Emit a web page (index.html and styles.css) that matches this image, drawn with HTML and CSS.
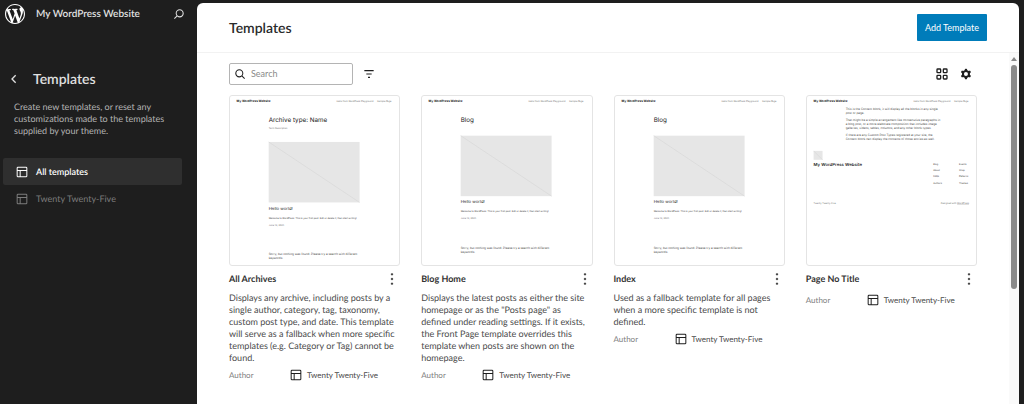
FILE: index.html
```html
<!DOCTYPE html>
<html lang="en">
<head>
    <meta charset="UTF-8">
    <meta name="viewport" content="width=device-width, initial-scale=1.0">
    <title>Templates</title>
    <link rel="stylesheet" href="styles.css">
</head>
<body>
    <svg class="sprite" aria-hidden="true">
        <symbol id="icon-layout" viewBox="0 0 24 24">
            <path d="M18 5.5H6a.5.5 0 00-.5.5v3h13V6a.5.5 0 00-.5-.5zm.5 5H10v8h8a.5.5 0 00.5-.5v-7.5zm-10 0h-3V18a.5.5 0 00.5.5h2.5v-8zM6 4h12a2 2 0 012 2v12a2 2 0 01-2 2H6a2 2 0 01-2-2V6a2 2 0 012-2z"/>
        </symbol>
        <symbol id="icon-search" viewBox="0 0 24 24">
            <path d="M13 5c-3.3 0-6 2.7-6 6 0 1.4.5 2.7 1.3 3.7l-3.8 3.8 1.1 1.1 3.8-3.8c1 .8 2.3 1.3 3.7 1.3 3.3 0 6-2.7 6-6S16.3 5 13 5zm0 10.5c-2.5 0-4.5-2-4.5-4.5s2-4.5 4.5-4.5 4.5 2 4.5 4.5-2 4.5-4.5 4.5z"/>
        </symbol>
        <symbol id="icon-more" viewBox="0 0 24 24">
            <path d="M13 20h-2v-2h2v2zm0-7h-2v-2h2v2zm0-7h-2V4h2v2z" stroke="currentColor"/>
        </symbol>
    </svg>

    <aside class="sidebar">
        <header class="site-hub">
            <svg class="logo" viewBox="0 0 20 20" aria-hidden="true">
                <path d="M20 10c0-5.51-4.49-10-10-10C4.48 0 0 4.49 0 10c0 5.52 4.48 10 10 10 5.51 0 10-4.48 10-10zM7.78 15.37L4.37 6.22c.55-.02 1.17-.08 1.17-.08.5-.06.44-1.13-.06-1.11 0 0-1.45.11-2.37.11-.18 0-.37 0-.58-.01C4.12 2.69 6.87 1.11 10 1.11c2.33 0 4.45.87 6.05 2.34-.68-.11-1.65.39-1.65 1.58 0 .74.45 1.36.9 2.1.35.61.55 1.36.55 2.46 0 1.49-1.4 5-1.4 5l-3.03-8.37c.54-.02.82-.17.82-.17.5-.05.44-1.25-.06-1.22 0 0-1.44.12-2.38.12-.87 0-2.33-.12-2.33-.12-.5-.03-.56 1.2-.06 1.22l.92.08 1.26 3.41zM17.41 10c.24-.64.74-1.87.43-4.25.7 1.29 1.05 2.71 1.05 4.25 0 3.29-1.73 6.24-4.4 7.78.97-2.59 1.94-5.2 2.92-7.78zM6.1 18.09C3.12 16.65 1.11 13.53 1.11 10c0-1.3.23-2.48.72-3.59C3.25 10.3 4.67 14.2 6.1 18.09zm4.03-6.63l2.58 6.98c-.86.29-1.76.45-2.71.45-.79 0-1.57-.11-2.29-.33.81-2.38 1.62-4.74 2.42-7.1z"/>
            </svg>
            <a class="site-name" href="#">My WordPress Website</a>
            <button class="icon-button" type="button" aria-label="Open command palette">
                <svg class="icon"><use href="#icon-search"/></svg>
            </button>
        </header>
        <div class="sidebar-title">
            <button class="icon-button" type="button" aria-label="Back">
                <svg class="icon" viewBox="0 0 24 24"><path d="M14.5 6.5L9 12l5.5 5.5" fill="none" stroke="currentColor" stroke-width="2"/></svg>
            </button>
            <h1>Templates</h1>
        </div>
        <p class="sidebar-text">Create new templates, or reset any customizations made to the templates supplied by your theme.</p>
        <nav class="sidebar-nav">
            <a class="nav-item active" href="#"><svg class="icon"><use href="#icon-layout"/></svg>All templates</a>
            <a class="nav-item" href="#"><svg class="icon"><use href="#icon-layout"/></svg>Twenty Twenty-Five</a>
        </nav>
    </aside>

    <main class="page">
        <header class="page-header">
            <h2>Templates</h2>
            <button class="primary-button" type="button">Add Template</button>
        </header>
        <div class="page-body">
            <div class="content">
                <div class="toolbar">
                    <label class="search">
                        <svg class="icon flip"><use href="#icon-search"/></svg>
                        <input type="search" placeholder="Search" aria-label="Search">
                    </label>
                    <button class="icon-button" type="button" aria-label="Filter">
                        <svg class="icon" viewBox="0 0 24 24"><path d="M5 7h14M8 12h8M10.500 17h3" fill="none" stroke="currentColor" stroke-width="1.800"/></svg>
                    </button>
                    <div class="view-actions">
                        <button class="icon-button" type="button" aria-label="Layout">
                            <svg class="icon outline" viewBox="0 0 24 24">
                                <rect x="4.500" y="4.500" width="5.500" height="5.500" rx="1"/>
                                <rect x="14" y="4.500" width="5.500" height="5.500" rx="1"/>
                                <rect x="4.500" y="14" width="5.500" height="5.500" rx="1"/>
                                <rect x="14" y="14" width="5.500" height="5.500" rx="1"/>
                            </svg>
                        </button>
                        <button class="icon-button" type="button" aria-label="View options">
                            <svg class="icon" viewBox="0 0 24 24"><path fill-rule="evenodd" d="M10.289 4.836A1 1 0 0111.275 4h1.306a1 1 0 01.987.836l.244 1.466c.787.26 1.503.679 2.108 1.218l1.393-.522a1 1 0 011.216.437l.653 1.13a1 1 0 01-.23 1.273l-1.148.944a6.025 6.025 0 010 2.435l1.149.946a1 1 0 01.23 1.272l-.653 1.13a1 1 0 01-1.216.437l-1.394-.522c-.605.54-1.32.958-2.108 1.218l-.244 1.466a1 1 0 01-.987.836h-1.306a1 1 0 01-.986-.836l-.244-1.466a5.995 5.995 0 01-2.108-1.218l-1.394.522a1 1 0 01-1.217-.436l-.653-1.131a1 1 0 01.23-1.272l1.149-.946a6.026 6.026 0 010-2.435l-1.148-.944a1 1 0 01-.23-1.272l.653-1.131a1 1 0 011.217-.437l1.393.522a5.994 5.994 0 012.108-1.218l.244-1.466zM14.929 12a3 3 0 11-6 0 3 3 0 016 0z"/></svg>
                        </button>
                    </div>
                </div>

                <div class="grid">
                    <article class="card">
                        <svg class="preview" viewBox="0 0 512 512">
                            <text class="site" x="20" y="19">My WordPress Website</text>
                            <text class="tiny" x="322" y="18">Hello from WordPress Playground</text>
                            <text class="tiny" x="445" y="18">Sample Page</text>
                            <text class="heading" x="117" y="79">Archive type: Name</text>
                            <text class="tiny" x="117" y="99">Term Description</text>
                            <rect x="117" y="139" width="275" height="183"/>
                            <path d="M117 139l275 183"/>
                            <text class="post" x="117" y="344">Hello world!</text>
                            <text class="small" x="117" y="371">Welcome to WordPress. This is your first post. Edit or delete it, then start writing!</text>
                            <text class="tiny" x="117" y="392">June 14, 2025</text>
                            <text class="copy" x="117" y="481">Sorry, but nothing was found. Please try a search with different</text>
                            <text class="copy" x="117" y="494">keywords.</text>
                        </svg>
                        <div class="card-head">
                            <h3>All Archives</h3>
                            <button class="icon-button" type="button" aria-label="Actions"><svg class="icon"><use href="#icon-more"/></svg></button>
                        </div>
                        <p>Displays any archive, including posts by a single author, category, tag, taxonomy, custom post type, and date. This template will serve as a fallback when more specific templates (e.g. Category or Tag) cannot be found.</p>
                        <div class="author"><span>Author</span><svg class="icon"><use href="#icon-layout"/></svg>Twenty Twenty-Five</div>
                    </article>

                    <article class="card">
                        <svg class="preview" viewBox="0 0 512 512">
                            <text class="site" x="20" y="19">My WordPress Website</text>
                            <text class="tiny" x="322" y="18">Hello from WordPress Playground</text>
                            <text class="tiny" x="445" y="18">Sample Page</text>
                            <text class="heading" x="117" y="79">Blog</text>
                            <rect x="117" y="120" width="275" height="183"/>
                            <path d="M117 120l275 183"/>
                            <text class="post" x="117" y="325">Hello world!</text>
                            <text class="small" x="117" y="352">Welcome to WordPress. This is your first post. Edit or delete it, then start writing!</text>
                            <text class="tiny" x="117" y="373">June 14, 2025</text>
                            <text class="copy" x="117" y="462">Sorry, but nothing was found. Please try a search with different</text>
                            <text class="copy" x="117" y="475">keywords.</text>
                        </svg>
                        <div class="card-head">
                            <h3>Blog Home</h3>
                            <button class="icon-button" type="button" aria-label="Actions"><svg class="icon"><use href="#icon-more"/></svg></button>
                        </div>
                        <p>Displays the latest posts as either the site homepage or as the "Posts page" as defined under reading settings. If it exists, the Front Page template overrides this template when posts are shown on the homepage.</p>
                        <div class="author"><span>Author</span><svg class="icon"><use href="#icon-layout"/></svg>Twenty Twenty-Five</div>
                    </article>

                    <article class="card">
                        <svg class="preview" viewBox="0 0 512 512">
                            <text class="site" x="20" y="19">My WordPress Website</text>
                            <text class="tiny" x="322" y="18">Hello from WordPress Playground</text>
                            <text class="tiny" x="445" y="18">Sample Page</text>
                            <text class="heading" x="117" y="79">Blog</text>
                            <rect x="117" y="120" width="275" height="183"/>
                            <path d="M117 120l275 183"/>
                            <text class="post" x="117" y="325">Hello world!</text>
                            <text class="small" x="117" y="352">Welcome to WordPress. This is your first post. Edit or delete it, then start writing!</text>
                            <text class="tiny" x="117" y="373">June 14, 2025</text>
                            <text class="copy" x="117" y="462">Sorry, but nothing was found. Please try a search with different</text>
                            <text class="copy" x="117" y="475">keywords.</text>
                        </svg>
                        <div class="card-head">
                            <h3>Index</h3>
                            <button class="icon-button" type="button" aria-label="Actions"><svg class="icon"><use href="#icon-more"/></svg></button>
                        </div>
                        <p>Used as a fallback template for all pages when a more specific template is not defined.</p>
                        <div class="author"><span>Author</span><svg class="icon"><use href="#icon-layout"/></svg>Twenty Twenty-Five</div>
                    </article>

                    <article class="card">
                        <svg class="preview" viewBox="0 0 512 512">
                            <text class="site" x="20" y="19">My WordPress Website</text>
                            <text class="tiny" x="322" y="18">Hello from WordPress Playground</text>
                            <text class="tiny" x="445" y="18">Sample Page</text>
                            <text class="copy" x="117" y="41">This is the Content block, it will display all the blocks in any single</text>
                            <text class="copy" x="117" y="54">post or page.</text>
                            <text class="copy" x="117" y="76">That might be a simple arrangement like consecutive paragraphs in</text>
                            <text class="copy" x="117" y="88">a blog post, or a more elaborate composition that includes image</text>
                            <text class="copy" x="117" y="100">galleries, videos, tables, columns, and any other block types.</text>
                            <text class="copy" x="117" y="121">If there are any Custom Post Types registered at your site, the</text>
                            <text class="copy" x="117" y="134">Content block can display the contents of those entries as well.</text>
                            <rect x="20" y="166" width="27" height="27"/>
                            <path d="M20 166l27 27"/>
                            <text class="name" x="20" y="212">My WordPress Website</text>
                            <text class="small" x="382" y="208">Blog</text>
                            <text class="small" x="382" y="227">About</text>
                            <text class="small" x="382" y="246">FAQs</text>
                            <text class="small" x="382" y="265">Authors</text>
                            <text class="small" x="460" y="208">Events</text>
                            <text class="small" x="460" y="227">Shop</text>
                            <text class="small" x="460" y="246">Patterns</text>
                            <text class="small" x="460" y="265">Themes</text>
                            <text class="tiny" x="20" y="327">Twenty Twenty-Five</text>
                            <text class="tiny" x="490" y="327" text-anchor="end">Designed with <tspan text-decoration="underline">WordPress</tspan></text>
                        </svg>
                        <div class="card-head">
                            <h3>Page No Title</h3>
                            <button class="icon-button" type="button" aria-label="Actions"><svg class="icon"><use href="#icon-more"/></svg></button>
                        </div>
                        <div class="author"><span>Author</span><svg class="icon"><use href="#icon-layout"/></svg>Twenty Twenty-Five</div>
                    </article>
                </div>
            </div>
            <div class="scrollbar" aria-hidden="true">
                <div class="scroll-arrow"></div>
                <div class="scroll-thumb"></div>
            </div>
        </div>
    </main>
</body>
</html>
```
FILE: styles.css
```css
* {
    box-sizing: border-box;
}
body {
    font-family: Lato, 'Open Sans', sans-serif;
    font-size: 9px;
    line-height: 12px;
    text-rendering: geometricPrecision;
    background: #1e1e1e;
    color: #4a4a4a;
    display: flex;
    min-height: 100vh;
    margin: 0;
}
h1, h2, h3, p {
    margin: 0;
}
a {
    color: inherit;
    text-decoration: none;
}
.sprite {
    position: absolute;
    width: 0;
    height: 0;
}
.icon {
    display: block;
    width: 16px;
    height: 16px;
    flex: none;
    fill: currentColor;
}
.icon.outline {
    fill: none;
    stroke: currentColor;
    stroke-width: 2px;
}
.flip {
    transform: scaleX(-1);
}
.icon-button {
    display: block;
    background: none;
    border: 0;
    padding: 0;
    color: inherit;
}

/* Sidebar */
.sidebar {
    width: 197px;
    flex: none;
    color: #e0e0e0;
}
.site-hub {
    display: flex;
    align-items: center;
    height: 28px;
    padding: 0 10px 0 5px;
}
.logo {
    width: 20px;
    height: 20px;
    margin-right: 11px;
    fill: #fff;
}
.site-name {
    flex: 1;
    font-size: 10px;
    font-weight: 600;
}
.sidebar-title {
    display: flex;
    align-items: center;
    gap: 11px;
    margin-top: 42px;
    padding-left: 6px;
}
h1, h2 {
    font-size: 14px;
    line-height: 18px;
    font-weight: 600;
}
.sidebar-text {
    padding: 13px 20px 0 14px;
    color: #b4b4b4;
}
.sidebar-nav {
    margin: 21px 15px 0 3px;
}
.nav-item {
    display: flex;
    align-items: center;
    gap: 6px;
    height: 27px;
    padding-left: 11px;
    border-radius: 2px;
    color: #7c7c7c;
}
.nav-item.active {
    background: #2f2f2f;
    color: #fff;
    font-weight: 600;
}

/* Page */
.page {
    flex: 1;
    display: flex;
    flex-direction: column;
    margin: 3px 5px 0 0;
    background: #fff;
    border-radius: 6px 6px 0 0;
    overflow: hidden;
}
.page-header {
    display: flex;
    align-items: center;
    justify-content: space-between;
    height: 50px;
    padding: 0 32px;
    border-bottom: 1px solid #f2f2f2;
    color: #2a2a2a;
}
.primary-button {
    height: 27px;
    padding: 0 8px;
    background: #007cba;
    border: 0;
    border-radius: 1px;
    color: #fff;
    font: inherit;
}
.page-body {
    flex: 1;
    display: flex;
}
.content {
    flex: 1;
    padding: 10px 32px 20px;
}
.toolbar {
    display: flex;
    align-items: center;
    margin-bottom: 10px;
    color: #1e1e1e;
}
.search {
    display: flex;
    align-items: center;
    gap: 3px;
    width: 124px;
    height: 22px;
    margin-right: 8px;
    padding-left: 2px;
    border: 1px solid #b4b4b4;
    border-radius: 2px;
}
.search input {
    width: 90px;
    border: 0;
    padding: 0;
    outline: 0;
    background: none;
    font: inherit;
}
.search input::placeholder {
    color: #8a8a8a;
}
.view-actions {
    display: flex;
    gap: 8px;
    margin-left: auto;
    padding-right: 3px;
}

/* Template cards */
.grid {
    display: grid;
    grid-template-columns: repeat(4, 1fr);
    gap: 21px;
}
.preview {
    display: block;
    width: 100%;
    aspect-ratio: 1;
    border: 1px solid #e4e4e4;
    border-radius: 3px;
    font-family: Inter, sans-serif;
}
.preview text {
    fill: #444;
}
.preview rect {
    fill: #e6e6e6;
}
.preview path {
    stroke: #d8d8d8;
    stroke-width: 2px;
}
.preview .site {
    font-size: 9px;
    font-weight: 700;
    fill: #222;
}
.preview .tiny {
    font-size: 7px;
    fill: #777;
}
.preview .small {
    font-size: 7px;
}
.preview .copy {
    font-size: 9px;
}
.preview .heading {
    font-size: 19px;
    fill: #222;
}
.preview .post {
    font-size: 13px;
    fill: #222;
}
.preview .name {
    font-size: 13px;
    font-weight: 600;
    fill: #222;
}
.card-head {
    display: flex;
    align-items: center;
    justify-content: space-between;
    height: 26px;
    color: #333;
}
.card-head h3 {
    font-size: 9px;
    font-weight: 700;
}
.card p {
    padding-right: 4px;
}
.author {
    display: flex;
    align-items: center;
    height: 16px;
    font-size: 8px;
}
p + .author {
    margin-top: 3px;
}
.author span {
    width: 59px;
    color: #808080;
}
.author .icon {
    margin-right: 3px;
    color: #1e1e1e;
}

/* Scrollbar */
.scrollbar {
    width: 10px;
    padding: 4px 2px 0;
    background: #fafafa;
}
.scroll-arrow {
    border: 3px solid transparent;
    border-top: 0;
    border-bottom: 4px solid #888;
}
.scroll-thumb {
    height: 224px;
    margin-top: 4px;
    background: #8a8a8a;
    border-radius: 3px;
}
```
